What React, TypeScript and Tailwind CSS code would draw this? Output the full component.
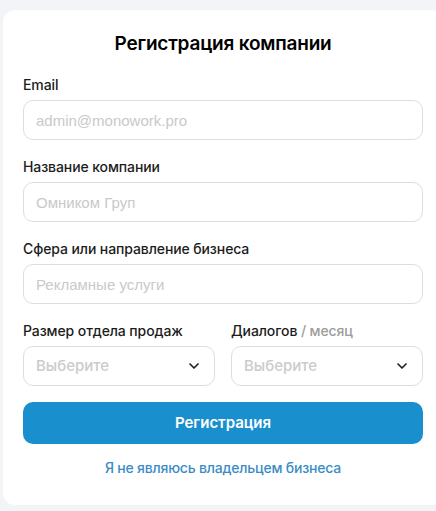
import { ChevronDown } from "lucide-react";

const inter = "font-['Inter','Noto_Sans',sans-serif]";

function Field({ label, placeholder }: { label: string; placeholder: string }) {
  return (
    <div className="flex flex-col gap-[5px]">
      <label className="text-[14px] leading-5 font-medium tracking-[-0.1px] text-[#1c1c1c]">{label}</label>
      <input
        placeholder={placeholder}
        className="h-10 w-full rounded-[10px] border border-[#dedede] bg-white px-3 font-['Liberation_Sans','Arial',sans-serif] text-[15px] text-[#222] outline-none placeholder:text-[#c9c9c9]"
      />
    </div>
  );
}

function Select({ label }: { label: React.ReactNode }) {
  return (
    <div className="flex flex-col gap-[5px]">
      <div className="text-[14px] leading-5 font-medium tracking-[-0.1px] text-[#1c1c1c]">{label}</div>
      <div className="flex h-10 items-center justify-between rounded-[10px] border border-[#dedede] bg-white pl-3 pr-3">
        <span className="text-[15px] font-medium text-[#cbcbcb]">Выберите</span>
        <ChevronDown size={16} strokeWidth={2.5} className="text-[#1f1f1f]" />
      </div>
    </div>
  );
}

export default function App() {
  return (
    <div className={`h-[511px] w-[436px] overflow-hidden bg-[#f3f4f8] ${inter}`}>
      <div className="ml-[3px] mt-[10px] w-[440px] rounded-[12px] bg-white px-5 pt-5 pb-[27px]">
        <h1 className="text-center text-[19px] leading-7 font-semibold tracking-[-0.2px] text-black">
          Регистрация компании
        </h1>

        <div className="mt-[17px] flex flex-col gap-[17px]">
          <Field label="Email" placeholder="admin@monowork.pro" />
          <Field label="Название компании" placeholder="Омником Груп" />
          <Field label="Сфера или направление бизнеса" placeholder="Рекламные услуги" />
          <div className="grid grid-cols-2 gap-4">
            <Select label="Размер отдела продаж" />
            <Select
              label={
                <>
                  Диалогов <span className="text-[#9c9c9c]">/ месяц</span>
                </>
              }
            />
          </div>
        </div>

        <button className="mt-4 h-[42px] w-full rounded-[10px] bg-[#1a8fce] text-[15px] font-semibold text-white">
          Регистрация
        </button>

        <div className="mt-[14px] text-center text-[14px] leading-5 font-medium tracking-[-0.2px] text-[#3b8cc6]">
          Я не являюсь владельцем бизнеса
        </div>
      </div>
    </div>
  );
}
